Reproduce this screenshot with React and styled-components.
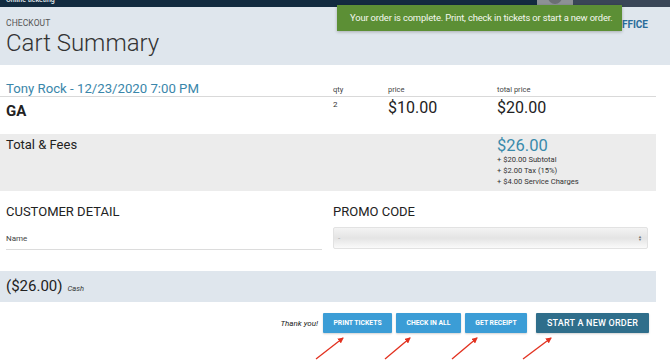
import React from "react";
import styled, { createGlobalStyle } from "styled-components";

const Global = createGlobalStyle`
  html, body { margin: 0; padding: 0; background: #fff; }
  body { font-family: Roboto, "Liberation Sans", Arial, sans-serif; color: #222; }
  * { box-sizing: border-box; }
`;

const Page = styled.div`
  position: relative;
  width: 670px;
  height: 362px;
  overflow: hidden;
  background: #fff;
`;

const TopBar = styled.div`
  display: flex;
  height: 7px;
  background: #132b40;
  overflow: hidden;
`;

const Brand = styled.span`
  margin: -4px 0 0 6px;
  font-size: 7px;
  line-height: 8px;
  color: #e8eef3;
  font-weight: 500;
`;

const TopSpacer = styled.div`
  flex: 1;
`;

const Avatar = styled.div`
  width: 36px;
  height: 5px;
  background: #8d9196;
  display: flex;
  justify-content: center;
  overflow: hidden;
  &::after {
    content: "";
    width: 14px;
    height: 14px;
    margin-top: -10px;
    border-radius: 50%;
    background: #6b6f74;
  }
`;

const TopRight = styled.div`
  width: 97px;
  background: #3a4657;
`;

const Header = styled.header`
  display: flex;
  justify-content: space-between;
  align-items: flex-start;
  height: 58px;
  background: #dfe6ed;
  padding: 11px 22px 0 6px;
`;

const Kicker = styled.div`
  font-size: 8.5px;
  line-height: 10px;
  color: #555;
  letter-spacing: 0.1px;
`;

const Title = styled.h1`
  margin: 1px 0 0;
  font-size: 24px;
  line-height: 28px;
  font-weight: 300;
  color: #333;
`;

const NavLink = styled.span`
  margin-top: 1px;
  font-size: 10px;
  line-height: 12px;
  font-weight: 700;
  color: #2b6d9a;
`;

const Toast = styled.div`
  position: absolute;
  top: 5px;
  left: 337px;
  width: 285px;
  height: 26px;
  overflow: hidden;
  background: #5c8f35;
  color: #f4f8ef;
  font-size: 9.4px;
  letter-spacing: -0.15px;
  line-height: 26px;
  white-space: nowrap;
  padding-left: 13px;
  box-shadow: 0 1px 3px rgba(0, 0, 0, 0.25);
`;

const Main = styled.main`
  padding: 0 14px 0 0;
`;

const TableRow = styled.div`
  display: grid;
  grid-template-columns: 327px 55px 109px 1fr;
  padding-left: 6px;
  height: ${(p) => p.$h}px;
  background: ${(p) => p.$bg || "transparent"};
  border-bottom: ${(p) => (p.$line ? "1px solid #d9d9d9" : "none")};
  margin-top: ${(p) => p.$mt || 0}px;
  align-items: ${(p) => p.$align || "start"};
`;

const EventName = styled.div`
  font-size: 13.2px;
  line-height: 15px;
  color: #3a86aa;
`;

const ColLabel = styled.div`
  font-size: 7.5px;
  line-height: 9px;
  color: #444;
  padding-bottom: 2px;
`;

const ItemName = styled.div`
  padding-top: 5px;
  font-size: 15px;
  line-height: 18px;
  font-weight: 700;
  color: #222;
`;

const Qty = styled.div`
  padding-top: 3px;
  font-size: 8px;
  line-height: 10px;
  color: #333;
`;

const Price = styled.div`
  padding-top: 2px;
  font-size: 16px;
  line-height: 18px;
  color: #222;
`;

const BandLabel = styled.div`
  padding-top: 3px;
  font-size: 13px;
  line-height: 15px;
  color: #222;
`;

const TotalCell = styled.div`
  grid-column: 4;
  padding-top: 3px;
`;

const GrandTotal = styled.div`
  font-size: 16.5px;
  line-height: 18px;
  color: #3a8aab;
`;

const FeeLine = styled.div`
  font-size: 7.6px;
  line-height: 10.8px;
  color: #333;
  &:first-of-type {
    margin-top: 3px;
  }
`;

const DetailGrid = styled.section`
  display: grid;
  grid-template-columns: 316px 315px;
  column-gap: 11px;
  padding: 13px 0 0 6px;
  height: 80px;
`;

const SectionTitle = styled.h2`
  margin: 0;
  font-size: 13px;
  line-height: 15px;
  font-weight: 400;
  color: #222;
`;

const Field = styled.div`
  margin-top: 15px;
  padding-bottom: 5px;
  border-bottom: 1px solid #dcdcdc;
  font-size: 8px;
  line-height: 10px;
  color: #444;
`;

const Select = styled.div`
  margin-top: 8px;
  height: 22px;
  display: flex;
  align-items: center;
  justify-content: space-between;
  padding: 0 5px 0 4px;
  border: 1px solid #e2e2e2;
  border-radius: 2px;
  background: linear-gradient(#f3f3f3, #e4e4e4 50%, #fafafa);
  font-size: 8px;
  color: #aaa;
`;

const Arrows = styled.span`
  display: flex;
  flex-direction: column;
  align-items: center;
  font-size: 4px;
  line-height: 3.5px;
  color: #777;
`;

const PayBand = styled.div`
  display: flex;
  align-items: baseline;
  height: 31px;
  padding: 7px 0 0 6px;
  background: #dfe6ed;
`;

const PayAmount = styled.span`
  font-size: 15px;
  line-height: 17px;
  color: #222;
`;

const PayMethod = styled.span`
  margin-left: 5px;
  font-size: 7.5px;
  font-style: italic;
  color: #333;
`;

const Actions = styled.div`
  display: flex;
  justify-content: flex-end;
  align-items: center;
  margin-top: 11px;
  padding-right: 21px;
`;

const Thanks = styled.span`
  margin-right: 5px;
  font-size: 8px;
  font-style: italic;
  color: #222;
`;

const Button = styled.button`
  width: ${(p) => p.$w}px;
  height: 20px;
  margin-left: ${(p) => p.$ml || 0}px;
  padding: 0;
  border: none;
  border-radius: 1px;
  background: ${(p) => (p.$primary ? "#2f6e8b" : "#3b9dd6")};
  color: #fff;
  font-family: Roboto, "Liberation Sans", Arial, sans-serif;
  font-size: ${(p) => (p.$primary ? 9 : 6.8)}px;
  font-weight: ${(p) => (p.$primary ? 500 : 700)};
  letter-spacing: ${(p) => (p.$primary ? 0.2 : 0)}px;
  box-shadow: 0 1px 2px rgba(0, 0, 0, 0.18);
`;

const Overlay = styled.svg`
  position: absolute;
  top: 0;
  left: 0;
  pointer-events: none;
`;

const arrows = [
  [316, 359, 343, 338],
  [385, 359, 410, 338],
  [452, 359, 477, 338],
  [523, 359, 551, 338],
];

export default function App() {
  return (
    <Page>
      <Global />
      <TopBar>
        <Brand>Online ticketing</Brand>
        <TopSpacer />
        <Avatar />
        <TopRight />
      </TopBar>
      <Header>
        <div>
          <Kicker>CHECKOUT</Kicker>
          <Title>Cart Summary</Title>
        </div>
        <NavLink>BOX OFFICE</NavLink>
      </Header>
      <Main>
        <TableRow $h={16} $mt={16} $line $align="end">
          <EventName>Tony Rock - 12/23/2020 7:00 PM</EventName>
          <ColLabel>qty</ColLabel>
          <ColLabel>price</ColLabel>
          <ColLabel>total price</ColLabel>
        </TableRow>
        <TableRow $h={37}>
          <ItemName>GA</ItemName>
          <Qty>2</Qty>
          <Price>$10.00</Price>
          <Price>$20.00</Price>
        </TableRow>
        <TableRow $h={57} $bg="#ececec">
          <BandLabel>Total &amp; Fees</BandLabel>
          <TotalCell>
            <GrandTotal>$26.00</GrandTotal>
            <FeeLine>+ $20.00 Subtotal</FeeLine>
            <FeeLine>+ $2.00 Tax (15%)</FeeLine>
            <FeeLine>+ $4.00 Service Charges</FeeLine>
          </TotalCell>
        </TableRow>
        <DetailGrid>
          <div>
            <SectionTitle>CUSTOMER DETAIL</SectionTitle>
            <Field>Name</Field>
          </div>
          <div>
            <SectionTitle>PROMO CODE</SectionTitle>
            <Select>
              <span>-</span>
              <Arrows>
                <span>▲</span>
                <span>▼</span>
              </Arrows>
            </Select>
          </div>
        </DetailGrid>
        <PayBand>
          <PayAmount>($26.00)</PayAmount>
          <PayMethod>Cash</PayMethod>
        </PayBand>
      </Main>
      <Actions>
        <Thanks>Thank you!</Thanks>
        <Button $w={69}>PRINT TICKETS</Button>
        <Button $w={65} $ml={4}>CHECK IN ALL</Button>
        <Button $w={62} $ml={4}>GET RECEIPT</Button>
        <Button $w={113} $ml={9} $primary>START A NEW ORDER</Button>
      </Actions>
      <Toast>Your order is complete. Print, check in tickets or start a new order.</Toast>
      <Overlay width="670" height="362" viewBox="0 0 670 362">
        <defs>
          <marker id="ah" markerWidth="6" markerHeight="6" refX="5" refY="3" orient="auto" markerUnits="userSpaceOnUse">
            <path d="M0,0 L6,3 L0,6 Z" fill="#e2311f" />
          </marker>
        </defs>
        {arrows.map(([x1, y1, x2, y2], i) => (
          <line key={i} x1={x1} y1={y1} x2={x2} y2={y2} stroke="#e2311f" strokeWidth="1.3" markerEnd="url(#ah)" />
        ))}
      </Overlay>
    </Page>
  );
}
